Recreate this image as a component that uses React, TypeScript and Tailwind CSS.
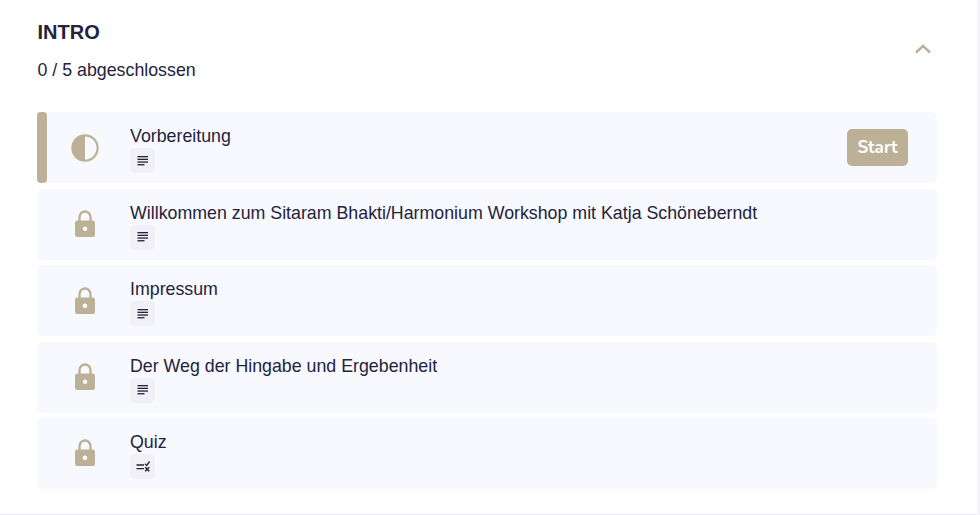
import React from 'react'

const font = { sans: "font-['Liberation_Sans',Arial,sans-serif]" }

const LockIcon = () => (
  <svg width="20" height="27" viewBox="0 0 20 27" fill="none">
    <path d="M4.500 12V7a5.500 5.500 0 0 1 11 0v5" stroke="#bcb097" strokeWidth="2.4" />
    <path
      fillRule="evenodd"
      clipRule="evenodd"
      fill="#bcb097"
      d="M2.500 10.500h15a2.500 2.500 0 0 1 2.500 2.500v11.500a2.500 2.500 0 0 1-2.500 2.500h-15A2.500 2.500 0 0 1 0 24.500V13A2.500 2.500 0 0 1 2.500 10.500zM10 16.400a2.300 2.300 0 1 0 0 4.600 2.300 2.300 0 0 0 0-4.600z"
    />
  </svg>
)

const HalfCircleIcon = () => (
  <svg width="28" height="28" viewBox="0 0 28 28" fill="none">
    <circle cx="14" cy="14" r="12.600" stroke="#bcb097" strokeWidth="2.2" />
    <path d="M14 1.400a12.600 12.600 0 0 0 0 25.200z" fill="#bcb097" />
  </svg>
)

const TextIcon = () => (
  <svg width="12" height="10" viewBox="0 0 12 10" fill="#23233c">
    <rect x="0.5" y="0" width="10.5" height="1.3" />
    <rect x="0.5" y="2.700" width="10.5" height="1.3" />
    <rect x="0.5" y="5.400" width="10.5" height="1.3" />
    <rect x="0.5" y="8.100" width="7" height="1.3" />
  </svg>
)

const QuizIcon = () => (
  <svg width="14" height="11" viewBox="0 0 14 11" fill="none" stroke="#23233c" strokeWidth="1.3">
    <path d="M0.500 4h7.500M0.500 7.700h7.500" />
    <path d="M9 2.800l1.700 1.600L13.500 0.500" />
    <path d="M9.200 6.300l4 4M13.200 6.300l-4 4" strokeWidth="1.600" />
  </svg>
)

type Lesson = {
  title: string
  type: 'text' | 'quiz'
  active?: boolean
}

const lessons: Lesson[] = [
  { title: 'Vorbereitung', type: 'text', active: true },
  { title: 'Willkommen zum Sitaram Bhakti/Harmonium Workshop mit Katja Schöneberndt', type: 'text' },
  { title: 'Impressum', type: 'text' },
  { title: 'Der Weg der Hingabe und Ergebenheit', type: 'text' },
  { title: 'Quiz', type: 'quiz' },
]

const LessonRow = ({ lesson }: { lesson: Lesson }) => (
  <div className="flex h-[71px] items-center rounded-[5px] bg-[#f8f9fe]">
    <div className="flex h-full w-[93px] shrink-0 items-center">
      {lesson.active && <div className="h-full w-[10px] shrink-0 rounded-[4px] bg-[#bcb097]" />}
      <div className={lesson.active ? 'ml-[24px] flex' : 'ml-[38px] flex pb-[1px]'}>
        {lesson.active ? <HalfCircleIcon /> : <LockIcon />}
      </div>
    </div>
    <div className="min-w-0 flex-1 pt-[2px]">
      <p className="text-[17.8px] leading-[24px] text-[#23233c]">{lesson.title}</p>
      <div className="flex h-[25px] w-[25px] items-center justify-center rounded-[5px] bg-[#f0f0f5]">
        {lesson.type === 'text' ? <TextIcon /> : <QuizIcon />}
      </div>
    </div>
    {lesson.active && (
      <button className="mr-[29px] flex h-[37px] w-[61px] items-center justify-center rounded-[5px] bg-[#bcb097] font-['Nunito','Noto_Sans',sans-serif] text-[17px] font-bold text-white">
        Start
      </button>
    )}
  </div>
)

const App = () => {
  return (
    <div className={`flex h-[515px] w-[980px] overflow-hidden bg-white ${font.sans}`}>
      <div className="flex h-full w-[977px] flex-col border-b border-[#e8e8ee] pl-[37px] pr-[40px] pt-[20px]">
        <div className="flex items-start justify-between">
          <div className="pl-[0.5px]">
            <h2 className="text-[20px] font-bold leading-[24px] text-[#23233c]">INTRO</h2>
            <p className="mt-[14px] text-[17.8px] leading-[24px] text-[#23233c]">0 / 5 abgeschlossen</p>
          </div>
          <svg className="mr-[6px] mt-[24px]" width="16" height="10" viewBox="0 0 16 10" fill="none">
            <path d="M1 8.500l7-6.500 7 6.500" stroke="#bcb097" strokeWidth="2.4" />
          </svg>
        </div>
        <div className="mt-[30.4px] flex flex-col gap-[5.4px]">
          {lessons.map((lesson) => (
            <LessonRow key={lesson.title} lesson={lesson} />
          ))}
        </div>
      </div>
      <div className="h-full w-[3px] bg-[#f5f5fa]" />
    </div>
  )
}

export default App
